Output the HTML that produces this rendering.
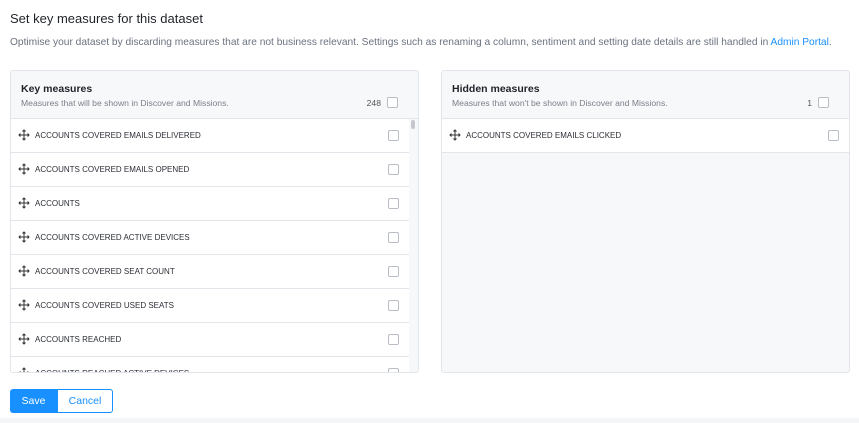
<!DOCTYPE html><html><head><style>
body{margin:0;width:859px;height:423px;background:#fff;font-family:"Liberation Sans",sans-serif;position:relative;overflow:hidden;color:#1f2329}
.t{position:absolute;left:10px;top:11px;font-size:13px;}
.s{position:absolute;left:10px;top:37px;font-size:10.2px;color:#6b7280;white-space:nowrap}
.s a{color:#1890ff;text-decoration:none}
.p{position:absolute;top:70px;width:407px;height:301px;border:1px solid #e2e5ea;border-radius:3px;background:#f7f8fa;overflow:hidden}
.h{height:47px;border-bottom:1px solid #e2e5ea;position:relative}
.h b{position:absolute;left:10px;top:12px;font-size:10.5px}
.h span{position:absolute;left:10px;top:27px;font-size:8.6px;color:#7a808a}
.h i{position:absolute;right:37px;top:27px;font-size:8.6px;color:#555;font-style:normal}
.cb{position:absolute;width:9px;height:9px;border:1px solid #b8bdc6;border-radius:2px;background:#fff}
.h .cb{right:20px;top:26px}
.r{height:33px;border-bottom:1px solid #e2e5ea;background:#fff;position:relative;font-size:8px;color:#2a2e35}
.r .l{position:absolute;left:24px;top:12px}
.r .cb{right:10px;top:11px}
.r svg{position:absolute;left:7px;top:10px}
</style></head><body>
<div class="t">Set key measures for this dataset</div>
<div class="s">Optimise your dataset by discarding measures that are not business relevant. Settings such as renaming a column, sentiment and setting date details are still handled in <a>Admin Portal</a>.</div>
<div class="p" style="left:10px">
<div class="h"><b>Key measures</b><span>Measures that will be shown in Discover and Missions.</span><i>248</i><div class="cb"></div></div>
<div style="position:absolute;left:0;top:48px;width:398px">
<div class="r"><svg width="12" height="12" viewBox="0 0 12 12" fill="none" stroke="#333" stroke-width="1"><path d="M6 1v10M1 6h10M4.5 2.5L6 1l1.5 1.5M4.5 9.5L6 11l1.5-1.5M2.5 4.5L1 6l1.5 1.5M9.5 4.5L11 6 9.5 7.5"/></svg><span class="l">ACCOUNTS COVERED EMAILS DELIVERED</span><div class="cb"></div></div>
<div class="r"><svg width="12" height="12" viewBox="0 0 12 12" fill="none" stroke="#333" stroke-width="1"><path d="M6 1v10M1 6h10M4.5 2.5L6 1l1.5 1.5M4.5 9.5L6 11l1.5-1.5M2.5 4.5L1 6l1.5 1.5M9.5 4.5L11 6 9.5 7.5"/></svg><span class="l">ACCOUNTS COVERED EMAILS OPENED</span><div class="cb"></div></div>
<div class="r"><svg width="12" height="12" viewBox="0 0 12 12" fill="none" stroke="#333" stroke-width="1"><path d="M6 1v10M1 6h10M4.5 2.5L6 1l1.5 1.5M4.5 9.5L6 11l1.5-1.5M2.5 4.5L1 6l1.5 1.5M9.5 4.5L11 6 9.5 7.5"/></svg><span class="l">ACCOUNTS</span><div class="cb"></div></div>
<div class="r"><svg width="12" height="12" viewBox="0 0 12 12" fill="none" stroke="#333" stroke-width="1"><path d="M6 1v10M1 6h10M4.5 2.5L6 1l1.5 1.5M4.5 9.5L6 11l1.5-1.5M2.5 4.5L1 6l1.5 1.5M9.5 4.5L11 6 9.5 7.5"/></svg><span class="l">ACCOUNTS COVERED ACTIVE DEVICES</span><div class="cb"></div></div>
<div class="r"><svg width="12" height="12" viewBox="0 0 12 12" fill="none" stroke="#333" stroke-width="1"><path d="M6 1v10M1 6h10M4.5 2.5L6 1l1.5 1.5M4.5 9.5L6 11l1.5-1.5M2.5 4.5L1 6l1.5 1.5M9.5 4.5L11 6 9.5 7.5"/></svg><span class="l">ACCOUNTS COVERED SEAT COUNT</span><div class="cb"></div></div>
<div class="r"><svg width="12" height="12" viewBox="0 0 12 12" fill="none" stroke="#333" stroke-width="1"><path d="M6 1v10M1 6h10M4.5 2.5L6 1l1.5 1.5M4.5 9.5L6 11l1.5-1.5M2.5 4.5L1 6l1.5 1.5M9.5 4.5L11 6 9.5 7.5"/></svg><span class="l">ACCOUNTS COVERED USED SEATS</span><div class="cb"></div></div>
<div class="r"><svg width="12" height="12" viewBox="0 0 12 12" fill="none" stroke="#333" stroke-width="1"><path d="M6 1v10M1 6h10M4.5 2.5L6 1l1.5 1.5M4.5 9.5L6 11l1.5-1.5M2.5 4.5L1 6l1.5 1.5M9.5 4.5L11 6 9.5 7.5"/></svg><span class="l">ACCOUNTS REACHED</span><div class="cb"></div></div>
<div class="r"><svg width="12" height="12" viewBox="0 0 12 12" fill="none" stroke="#333" stroke-width="1"><path d="M6 1v10M1 6h10M4.5 2.5L6 1l1.5 1.5M4.5 9.5L6 11l1.5-1.5M2.5 4.5L1 6l1.5 1.5M9.5 4.5L11 6 9.5 7.5"/></svg><span class="l">ACCOUNTS REACHED ACTIVE DEVICES</span><div class="cb"></div></div>
</div>
<div style="position:absolute;left:400px;top:49px;width:4px;height:9px;border-radius:2px;background:#c4c7cc"></div>
</div>
<div class="p" style="left:441px">
<div class="h"><b>Hidden measures</b><span>Measures that won't be shown in Discover and Missions.</span><i>1</i><div class="cb"></div></div>
<div class="r"><svg width="12" height="12" viewBox="0 0 12 12" fill="none" stroke="#333" stroke-width="1"><path d="M6 1v10M1 6h10M4.5 2.5L6 1l1.5 1.5M4.5 9.5L6 11l1.5-1.5M2.5 4.5L1 6l1.5 1.5M9.5 4.5L11 6 9.5 7.5"/></svg><span class="l">ACCOUNTS COVERED EMAILS CLICKED</span><div class="cb"></div></div>
</div>
<div style="position:absolute;left:10px;top:389px;width:47px;height:24px;background:#1890ff;border-radius:3px 0 0 3px;color:#fff;font-size:10.5px;line-height:24px;text-align:center">Save</div>
<div style="position:absolute;left:57px;top:389px;width:54px;height:22px;border:1px solid #1890ff;border-radius:0 3px 3px 0;color:#1890ff;font-size:10.5px;line-height:22px;text-align:center">Cancel</div>
<div style="position:absolute;left:0;top:418px;width:859px;height:5px;background:#f5f6f7"></div>
</body></html>
